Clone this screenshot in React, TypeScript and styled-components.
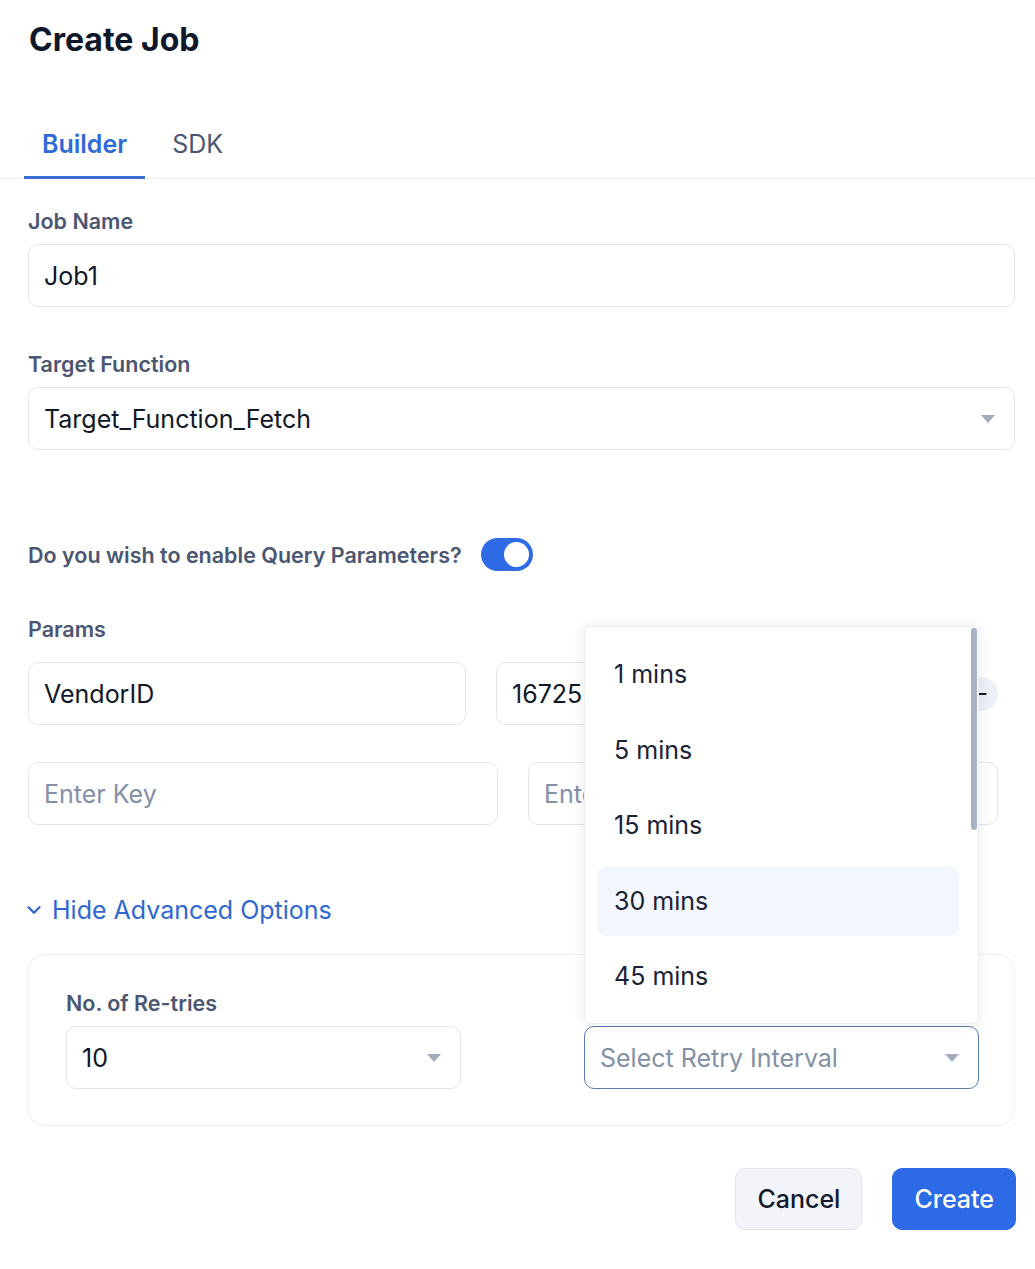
import React from "react";
import styled, { createGlobalStyle } from "styled-components";
import { ChevronDown, Minus } from "lucide-react";

const GlobalStyle = createGlobalStyle`
  body {
    margin: 0;
    background: #ffffff;
    font-family: Inter, "Noto Sans", sans-serif;
    color: #111827;
  }
  * { box-sizing: border-box; }
`;

const intervals = ["1 mins", "5 mins", "15 mins", "30 mins", "45 mins", "1 hour", "2 hours", "6 hours", "12 hours", "24 hours"];

export default function App() {
  return (
    <>
      <GlobalStyle />
      <Page>
        <Title>Create Job</Title>
        <TabBar>
          <Tab $active>Builder</Tab>
          <Tab>SDK</Tab>
        </TabBar>

        <Form>
          <Field>
            <Label>Job Name</Label>
            <Input defaultValue="Job1" />
          </Field>

          <Field $top={45}>
            <Label>Target Function</Label>
            <SelectBox>
              <SelectText>Target_Function_Fetch</SelectText>
              <Caret />
            </SelectBox>
          </Field>

          <ToggleRow>
            <Label as="span">Do you wish to enable Query Parameters?</Label>
            <Toggle>
              <Knob />
            </Toggle>
          </ToggleRow>

          <Field $top={46}>
            <Label>Params</Label>
            <ParamRow>
              <Input defaultValue="VendorID" />
              <Input defaultValue="16725" />
              <RoundButton>
                <Minus size={16} strokeWidth={3} color="#111827" />
              </RoundButton>
            </ParamRow>
            <ParamRow $top={37}>
              <Input placeholder="Enter Key" />
              <Input placeholder="Enter Value" />
            </ParamRow>
          </Field>

          <AdvancedToggle>
            <ChevronDown size={22} strokeWidth={2.6} />
            <span>Hide Advanced Options</span>
          </AdvancedToggle>

          <AdvancedBox>
            <Field>
              <Label>No. of Re-tries</Label>
              <SelectBox>
                <SelectText>10</SelectText>
                <Caret />
              </SelectBox>
            </Field>
            <Field>
              <Label>Retry Interval</Label>
              <Anchor>
                <SelectBox $focused>
                  <SelectText $placeholder>Select Retry Interval</SelectText>
                  <Caret />
                </SelectBox>
                <Menu>
                  <MenuList>
                    {intervals.map((v) => (
                      <MenuItem key={v} $active={v === "30 mins"}>
                        {v}
                      </MenuItem>
                    ))}
                  </MenuList>
                  <ScrollThumb />
                </Menu>
              </Anchor>
            </Field>
          </AdvancedBox>

          <Actions>
            <Button>Cancel</Button>
            <Button $primary>Create</Button>
          </Actions>
        </Form>
      </Page>
    </>
  );
}

const Page = styled.div`
  width: 1035px;
  padding-top: 20px;
  padding-bottom: 38px;
`;

const Title = styled.h1`
  margin: 0 0 54px 29px;
  font-size: 32px;
  line-height: 40px;
  font-weight: 700;
  color: #0f172a;
`;

const TabBar = styled.div`
  display: flex;
  gap: 9px;
  padding-left: 24px;
  border-bottom: 1px solid #eef0f3;
`;

const Tab = styled.div<{ $active?: boolean }>`
  padding: 15px 18px 17px;
  font-size: 25px;
  line-height: 30px;
  font-weight: ${(p) => (p.$active ? 600 : 400)};
  color: ${(p) => (p.$active ? "#2f6ad9" : "#4b5672")};
  border-bottom: 3px solid ${(p) => (p.$active ? "#3b6fd4" : "transparent")};
  margin-bottom: -1px;
`;

const Form = styled.div`
  display: flex;
  flex-direction: column;
  padding: 30px 20px 0 28px;
`;

const Field = styled.div<{ $top?: number }>`
  display: flex;
  flex-direction: column;
  gap: 11px;
  margin-top: ${(p) => p.$top ?? 0}px;
  min-width: 0;
`;

const Label = styled.label`
  font-size: 21.5px;
  line-height: 24px;
  font-weight: 600;
  color: #4b5672;
`;

const Input = styled.input`
  min-width: 0;
  height: 63px;
  padding: 0 15px;
  border: 1px solid #e3e6eb;
  border-radius: 10px;
  font-family: inherit;
  font-size: 25px;
  color: #111827;
  background: #fff;
  outline: none;
  &::placeholder {
    color: #8390a6;
  }
`;

const SelectBox = styled.div<{ $focused?: boolean }>`
  display: flex;
  align-items: center;
  justify-content: space-between;
  height: 63px;
  padding: 0 19px 0 15px;
  border: 1px solid ${(p) => (p.$focused ? "#5a7bab" : "#e3e6eb")};
  border-radius: 10px;
  background: #fff;
`;

const SelectText = styled.span<{ $placeholder?: boolean }>`
  font-size: 25px;
  color: ${(p) => (p.$placeholder ? "#8390a6" : "#111827")};
`;

const Caret = styled.span`
  width: 0;
  height: 0;
  border-left: 7px solid transparent;
  border-right: 7px solid transparent;
  border-top: 8px solid #a4abba;
`;

const ToggleRow = styled.div`
  display: flex;
  align-items: center;
  gap: 19px;
  margin-top: 88px;
`;

const Toggle = styled.div`
  display: flex;
  align-items: center;
  justify-content: flex-end;
  width: 52px;
  height: 33px;
  padding: 0 4px;
  border-radius: 17px;
  background: #2f6be4;
`;

const Knob = styled.div`
  width: 25px;
  height: 25px;
  border-radius: 50%;
  background: #fff;
`;

const ParamRow = styled.div<{ $top?: number }>`
  display: flex;
  align-items: center;
  gap: 30px;
  margin-top: ${(p) => (p.$top ? p.$top - 11 : 10)}px;
  width: 970px;
  & > input {
    flex: 1 1 0;
  }
`;

const RoundButton = styled.div`
  flex: none;
  display: flex;
  align-items: center;
  justify-content: center;
  width: 34px;
  height: 34px;
  border-radius: 50%;
  background: #eef0f7;
`;

const AdvancedToggle = styled.div`
  display: flex;
  align-items: center;
  gap: 7px;
  margin: 70px 0 0 -5px;
  font-size: 25px;
  line-height: 30px;
  color: #3068d0;
`;

const AdvancedBox = styled.div`
  display: grid;
  grid-template-columns: 395px 395px;
  column-gap: 123px;
  margin-top: 29px;
  padding: 36px 37px;
  border: 1px solid #eff1f4;
  border-radius: 16px;
`;

const Anchor = styled.div`
  position: relative;
`;

const Menu = styled.div`
  position: absolute;
  left: 0;
  right: 0;
  bottom: calc(100% + 2px);
  height: 398px;
  overflow: hidden;
  background: #fff;
  border: 1px solid #eceef2;
  border-radius: 6px;
  box-shadow: 0 0 14px rgba(15, 23, 42, 0.08);
`;

const MenuList = styled.ul`
  list-style: none;
  margin: 0;
  padding: 12px 19px 0 12px;
  display: flex;
  flex-direction: column;
  gap: 5.5px;
`;

const MenuItem = styled.li<{ $active?: boolean }>`
  display: flex;
  align-items: center;
  height: 70px;
  padding-left: 17px;
  border-radius: 10px;
  font-size: 25px;
  color: #1a2236;
  background: ${(p) => (p.$active ? "#f3f6fd" : "transparent")};
`;

const ScrollThumb = styled.div`
  position: absolute;
  top: 1px;
  right: 1px;
  width: 6px;
  height: 202px;
  border-radius: 3px;
  background: #a8b2c4;
`;

const Actions = styled.div`
  display: flex;
  justify-content: flex-end;
  gap: 30px;
  margin-top: 42px;
  margin-right: -1px;
`;

const Button = styled.button<{ $primary?: boolean }>`
  height: 62px;
  padding: 0 21px;
  border-radius: 10px;
  border: 1px solid ${(p) => (p.$primary ? "#2c6ae6" : "#e3e6eb")};
  background: ${(p) => (p.$primary ? "#2c6ae6" : "#f2f4f9")};
  color: ${(p) => (p.$primary ? "#ffffff" : "#111a2e")};
  font-family: inherit;
  font-size: 25px;
  font-weight: 500;
`;
